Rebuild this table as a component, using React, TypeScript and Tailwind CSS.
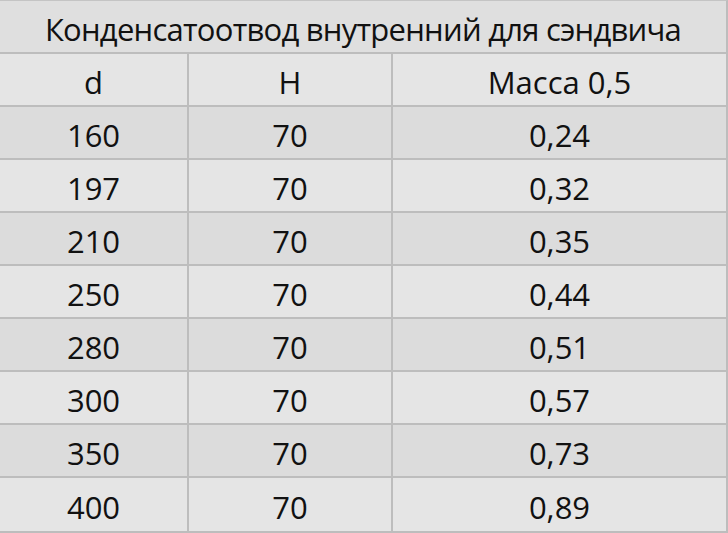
const rows: [string, string, string][] = [
  ['160', '70', '0,24'],
  ['197', '70', '0,32'],
  ['210', '70', '0,35'],
  ['250', '70', '0,44'],
  ['280', '70', '0,51'],
  ['300', '70', '0,57'],
  ['350', '70', '0,73'],
  ['400', '70', '0,89'],
];

export default function App() {
  return (
    <div
      className="w-[728px] h-[533px] bg-[#e4e4e4] text-[#111] text-[31px] overflow-hidden"
      style={{ fontFamily: '"Open Sans", "Noto Sans", sans-serif' }}
    >
      <div className="w-[728px] border-t border-[#c4c4c4] border-r-2 border-r-[#bdbdbd] border-b-2 border-b-[#bdbdbd]">
        <div className="h-[53px] pt-[5px] flex items-center justify-center bg-[#dfdfdf] border-b-2 border-[#bdbdbd] tracking-[-0.75px]">
          Конденсатоотвод внутренний для сэндвича
        </div>
        <Row cells={['d', 'H', 'Масса 0,5']} bg="bg-[#e5e5e5]" />
        {rows.map((r, i) => (
          <Row key={r[0]} cells={r} bg={i % 2 === 0 ? 'bg-[#dcdcdc]' : 'bg-[#e5e5e5]'} last={i === rows.length - 1} />
        ))}
      </div>
    </div>
  );
}

function Row({ cells, bg, last }: { cells: string[]; bg: string; last?: boolean }) {
  return (
    <div className={`grid grid-cols-[187px_204px_1fr] h-[53px] ${bg} ${last ? '' : 'border-b-2 border-[#bdbdbd]'}`}>
      <div className="flex items-center justify-center pt-[5px]">{cells[0]}</div>
      <div className="flex items-center justify-center pt-[5px] border-l-2 border-[#bdbdbd]">{cells[1]}</div>
      <div className="flex items-center justify-center pt-[5px] border-l-2 border-[#bdbdbd]">{cells[2]}</div>
    </div>
  );
}
